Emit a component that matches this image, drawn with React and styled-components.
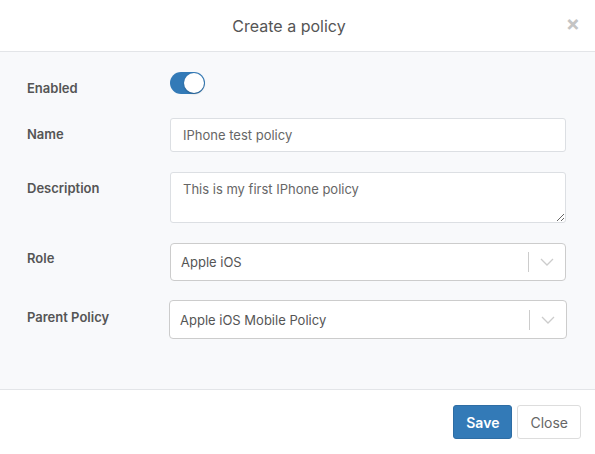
import React from 'react';
import styled, { createGlobalStyle } from 'styled-components';

const GlobalStyle = createGlobalStyle`
  html, body {
    margin: 0;
    padding: 0;
    background: #fff;
  }
  body {
    font-family: 'Inter', 'Liberation Sans', sans-serif;
    color: #555;
  }
`;

const ChevronIcon = () => (
  <svg width="14" height="8" viewBox="0 0 14 8" fill="none">
    <path d="M1 1l6 6 6-6" stroke="#ccc" strokeWidth="1.3" />
  </svg>
);

const App = () => {
  return (
    <>
      <GlobalStyle />
      <Modal>
        <Header>
          <Title>Create a policy</Title>
          <CloseX aria-label="close">×</CloseX>
        </Header>
        <Body>
          <Row>
            <Label top={8}>Enabled</Label>
            <Toggle>
              <Knob />
            </Toggle>
          </Row>
          <Row gap={22}>
            <Label top={8}>Name</Label>
            <TextInput defaultValue="IPhone test policy" />
          </Row>
          <Row gap={20}>
            <Label top={8}>Description</Label>
            <TextArea defaultValue="This is my first IPhone policy" />
          </Row>
          <Row gap={20}>
            <Label top={7}>Role</Label>
            <Select>
              <SelectValue>Apple iOS</SelectValue>
              <SelectDivider />
              <Chevron>
                <ChevronIcon />
              </Chevron>
            </Select>
          </Row>
          <Row gap={19}>
            <Label top={9}>Parent Policy</Label>
            <Select wide>
              <SelectValue>Apple iOS Mobile Policy</SelectValue>
              <SelectDivider />
              <Chevron>
                <ChevronIcon />
              </Chevron>
            </Select>
          </Row>
        </Body>
        <Footer>
          <Button primary>Save</Button>
          <Button>Close</Button>
        </Footer>
      </Modal>
    </>
  );
};

export default App;

const Modal = styled.div`
  width: 595px;
  height: 454px;
  display: flex;
  flex-direction: column;
  background: #fff;
`;

const Header = styled.div`
  position: relative;
  height: 51px;
  display: flex;
  align-items: center;
  justify-content: center;
  padding-right: 17px;
  border-bottom: 1px solid #e3e5e8;
  flex-shrink: 0;
`;

const Title = styled.h4`
  margin: 0;
  font-size: 16px;
  font-weight: 400;
  color: #555;
`;

const CloseX = styled.span`
  position: absolute;
  right: 15px;
  top: 13px;
  font-size: 21px;
  font-weight: 700;
  color: #c4c4c4;
  line-height: 1;
`;

const Body = styled.div`
  background: #f8f9fb;
  padding: 20px 29px 0 27px;
  height: 337px;
  box-sizing: border-box;
  display: flex;
  flex-direction: column;
`;

const Row = styled.div`
  display: grid;
  grid-template-columns: 143px 1fr;
  align-items: start;
  margin-top: ${(p) => p.gap || 0}px;
`;

const Label = styled.label`
  font-size: 13px;
  font-weight: 600;
  color: #555;
  padding-top: ${(p) => p.top}px;
  line-height: 16px;
`;

const Toggle = styled.div`
  width: 35px;
  height: 22px;
  border-radius: 11px;
  background: #337ab7;
  position: relative;
`;

const Knob = styled.div`
  position: absolute;
  right: 1px;
  top: 1px;
  width: 20px;
  height: 20px;
  border-radius: 50%;
  background: #fff;
  box-shadow: 0 1px 2px rgba(0, 0, 0, 0.25);
`;

const fieldBase = `
  box-sizing: border-box;
  width: 396px;
  border: 1px solid #dcdfe3;
  border-radius: 3px;
  background: #fff;
  font-family: 'Inter', 'Liberation Sans', sans-serif;
  font-size: 13px;
  color: #666;
  outline: none;
  margin: 0;
`;

const TextInput = styled.input`
  ${fieldBase}
  height: 34px;
  padding: 0 12px;
`;

const TextArea = styled.textarea`
  ${fieldBase}
  height: 51px;
  padding: 7px 12px;
  line-height: 18px;
  resize: vertical;
  display: block;
`;

const Select = styled.div`
  ${fieldBase}
  height: ${(p) => (p.wide ? 39 : 38)}px;
  width: ${(p) => (p.wide ? 398 : 396)}px;
  margin-left: ${(p) => (p.wide ? -1 : 0)}px;
  border-color: #ccc;
  border-radius: 4px;
  display: flex;
  align-items: center;
  padding-left: 10px;
`;

const SelectValue = styled.div`
  flex: 1;
  color: #555;
`;

const SelectDivider = styled.span`
  width: 1px;
  height: 20px;
  background: #ccc;
`;

const Chevron = styled.div`
  width: 36px;
  display: flex;
  justify-content: center;
  align-items: center;
`;

const Footer = styled.div`
  flex: 1;
  border-top: 1px solid #e3e5e8;
  display: flex;
  justify-content: flex-end;
  align-items: flex-start;
  gap: 5px;
  padding: 15px 14px 0 0;
`;

const Button = styled.button`
  height: 34px;
  padding: 0 12px;
  font-family: 'Inter', 'Liberation Sans', sans-serif;
  font-size: 14px;
  font-weight: ${(p) => (p.primary ? 600 : 400)};
  border-radius: 3px;
  border: 1px solid ${(p) => (p.primary ? '#2e6da4' : '#ddd')};
  background: ${(p) => (p.primary ? '#337ab7' : '#fff')};
  color: ${(p) => (p.primary ? '#fff' : '#666')};
`;
